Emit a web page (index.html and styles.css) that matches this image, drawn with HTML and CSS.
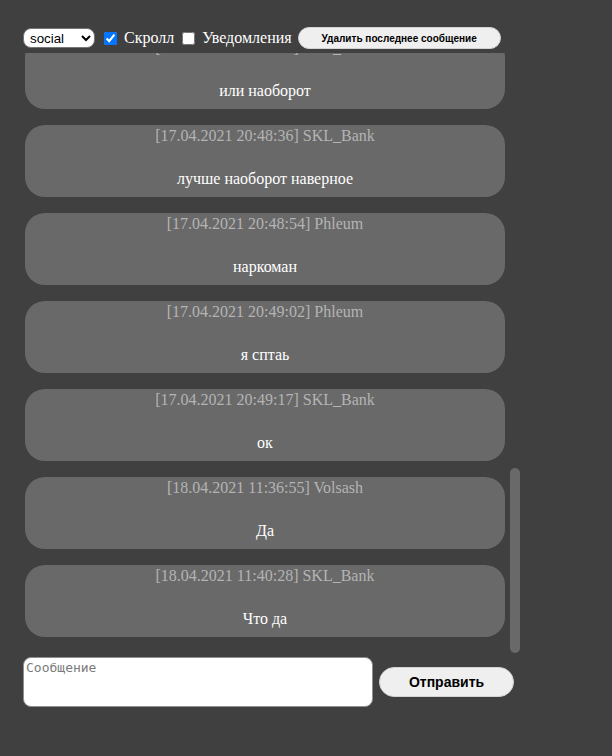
FILE: index.html
```html
<!DOCTYPE html>
<html lang="ru">
<head>
<meta charset="utf-8">
<title>Чат</title>
<link rel="stylesheet" href="styles.css">
</head>
<body>
<div class="page">
  <div class="toolbar">
    <select class="room">
      <option>social</option>
      <option>general</option>
    </select>
    <input type="checkbox" class="check check-first" checked>
    <span class="label">Скролл</span>
    <input type="checkbox" class="check">
    <span class="label">Уведомления</span>
    <button class="delete-btn">Удалить последнее сообщение</button>
  </div>

  <div class="chat-wrap">
    <div class="chat">
      <div class="list">
        <div class="msg"><div class="time">[17.04.2021 20:31:02] Volsash</div><div class="text">всем привет</div></div>
        <div class="msg"><div class="time">[17.04.2021 20:31:40] SKL_Bank</div><div class="text">привет</div></div>
        <div class="msg"><div class="time">[17.04.2021 20:32:15] Phleum</div><div class="text">ку</div></div>
        <div class="msg"><div class="time">[17.04.2021 20:33:08] Volsash</div><div class="text">кто на сервере?</div></div>
        <div class="msg"><div class="time">[17.04.2021 20:34:51] SKL_Bank</div><div class="text">я</div></div>
        <div class="msg"><div class="time">[17.04.2021 20:36:12] Phleum</div><div class="text">я тоже</div></div>
        <div class="msg"><div class="time">[17.04.2021 20:38:27] Volsash</div><div class="text">что делаете</div></div>
        <div class="msg"><div class="time">[17.04.2021 20:40:03] SKL_Bank</div><div class="text">строим банк</div></div>
        <div class="msg"><div class="time">[17.04.2021 20:41:44] Phleum</div><div class="text">а я копаю</div></div>
        <div class="msg"><div class="time">[17.04.2021 20:43:19] Volsash</div><div class="text">понятно</div></div>
        <div class="msg"><div class="time">[17.04.2021 20:45:05] Phleum</div><div class="text">может вместе?</div></div>
        <div class="msg"><div class="time">[17.04.2021 20:46:33] SKL_Bank</div><div class="text">давай</div></div>
        <div class="msg"><div class="time">[17.04.2021 20:47:21] Phleum</div><div class="text">сначала шахта</div></div>
        <div class="msg"><div class="time">[17.04.2021 20:47:58] Phleum</div><div class="text">потом банк</div></div>
        <div class="msg"><div class="time">[17.04.2021 20:48:30] SKL_Bank</div><div class="text">или наоборот</div></div>
        <div class="msg"><div class="time">[17.04.2021 20:48:36] SKL_Bank</div><div class="text">лучше наоборот наверное</div></div>
        <div class="msg"><div class="time">[17.04.2021 20:48:54] Phleum</div><div class="text">наркоман</div></div>
        <div class="msg"><div class="time">[17.04.2021 20:49:02] Phleum</div><div class="text">я сптаь</div></div>
        <div class="msg"><div class="time">[17.04.2021 20:49:17] SKL_Bank</div><div class="text">ок</div></div>
        <div class="msg"><div class="time">[18.04.2021 11:36:55] Volsash</div><div class="text">Да</div></div>
        <div class="msg"><div class="time">[18.04.2021 11:40:28] SKL_Bank</div><div class="text">Что да</div></div>
      </div>
    </div>
    <div class="track"><div class="thumb"></div></div>
  </div>

  <div class="composer">
    <textarea class="input" placeholder="Сообщение"></textarea>
    <button class="send-btn">Отправить</button>
  </div>
</div>
</body>
</html>
```

FILE: styles.css
```css
html, body {
  margin: 0;
  padding: 0;
  background: #404040;
}

.page {
  padding: 27px 0 0 23px;
}

.toolbar {
  display: flex;
  align-items: center;
  height: 22px;
}

.room {
  width: 72px;
  height: 20px;
  margin: 0;
  padding: 0 0 0 2px;
  font: 13.33px "Liberation Sans", Arial, sans-serif;
  background: #ffffff;
  color: #000;
  border: 1px solid #767676;
  border-radius: 8px;
}

.check {
  width: 13px;
  height: 13px;
  margin: 0 0 0 8px;
}

.check-first {
  margin-left: 9px;
}

.label {
  margin-left: 7px;
  font: 16px "Liberation Serif", "Times New Roman", serif;
  color: #ffffff;
}

.delete-btn {
  margin-left: 6px;
  width: 203px;
  height: 22px;
  padding: 0;
  font: bold 10px "Liberation Sans", Arial, sans-serif;
  color: #000;
  background: #efefef;
  border: 1px solid #d4d4d4;
  border-radius: 11px;
}

.chat-wrap {
  margin: 4px 0 0 2px;
  width: 495px;
  height: 600px;
  display: flex;
}

.chat {
  flex: 0 0 485px;
  height: 100%;
  overflow-y: auto;
  scrollbar-width: none;
  display: flex;
  flex-direction: column-reverse;
}

.track {
  flex: 0 0 10px;
  display: flex;
  flex-direction: column;
  justify-content: flex-end;
}

.thumb {
  height: 185px;
  background: #696969;
  border-radius: 5px;
}

.list {
  display: flex;
  flex-direction: column;
  gap: 16px;
  padding-bottom: 16px;
  padding-right: 5px;
}

.msg {
  background: #696969;
  border-radius: 20px;
  padding: 2px 0 9px;
  text-align: center;
  font: 16px "Liberation Serif", "Times New Roman", serif;
  line-height: 18px;
}

.time {
  color: #b4b4b4;
}

.text {
  margin-top: 25px;
  color: #ffffff;
}

.composer {
  margin-top: 4px;
  display: flex;
  align-items: center;
  gap: 6px;
}

.input {
  box-sizing: border-box;
  width: 350px;
  height: 50px;
  margin: 0;
  padding: 2px;
  font: 13px "DejaVu Sans Mono", monospace;
  background: #ffffff;
  border: 1px solid #8f8f8f;
  border-radius: 8px;
  resize: none;
}

.input::placeholder {
  color: #7a7a7a;
}

.send-btn {
  width: 135px;
  height: 30px;
  padding: 0;
  font: bold 14px "Liberation Sans", Arial, sans-serif;
  color: #000;
  background: #efefef;
  border: 1px solid #d4d4d4;
  border-radius: 15px;
}
```
